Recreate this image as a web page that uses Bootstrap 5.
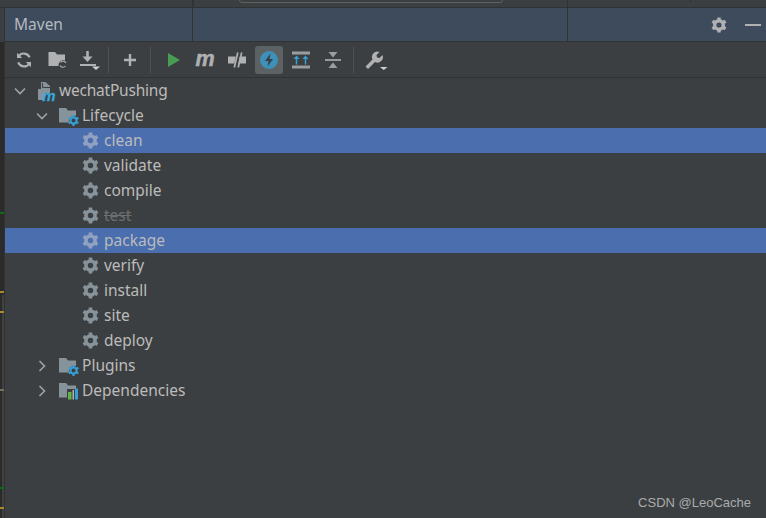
<!DOCTYPE html>
<html lang="en">
<head>
<meta charset="utf-8">
<title>Maven</title>
<link href="https://cdn.jsdelivr.net/npm/bootstrap@5.3.0/dist/css/bootstrap.min.css" rel="stylesheet">
<style>
html,body{height:518px;overflow:hidden}
body{background:#3c3f41;color:#bbb;font-family:"Noto Sans","Open Sans",sans-serif;font-size:15.5px;position:relative}
.topstrip{height:8px;border-bottom:1px solid #323232;position:relative}
.topmark{position:absolute;top:0;width:1px;height:7px;background:#323232}
.topmark.tm1{left:193px}
.topmark.tm2{left:690px;height:2px}
.topbox{position:absolute;left:239px;top:-6px;width:264px;height:9px;border:1px solid #5e6060;border-radius:3px}
.workarea{height:510px}
.railcol{width:5px;flex:none;position:relative;border-right:1px solid #323232}
.railtop{height:34px;background:#3c3f41}
.railrest{height:476px;background:#2b2b2b}
.railthumb{position:absolute;left:2px;top:287px;width:2px;height:223px;background:#414141}
.railmark{position:absolute;left:0;width:4px;height:2px}
.mgreen{background:#0b6e17}
.myellow{background:#a8892c}
.mgrey{background:#77725f}
.rm1{top:204px}.rm2{top:283px}.rm3{top:303px}.rm4{top:381px}.rm5{top:479px}.rm6{top:499px}
.panel{min-width:0}
.panelhead{height:34px;background:#3d4b5c;border-bottom:1px solid #323232;padding:0 9px;position:relative;font-size:15.5px;color:#b3bac2}
.headline{position:absolute;top:0;width:1px;height:41px;margin-top:-8px;background:#323232}
.hl1{left:187px}
.hl2{left:562px}
.headtools{gap:18px;margin-right:-4px;color:#afb1b3}
.toolrow{height:36px;border-bottom:1px solid #323232;padding-left:3px}
.toolbtn{width:32px;height:35px;flex:none;position:relative;display:flex;align-items:center;justify-content:center}
.toolbtn.activebtn::before{content:"";position:absolute;left:2px;top:4px;width:28px;height:27.5px;background:#5c6164;border-radius:3px}
.toolbtn svg{position:relative;display:block}
.toolsep{width:1px;height:26px;background:#515151;flex:none}
.sepa{margin:0 5px 0 4px}
.sepb{margin:0 6px 0 4px}
.treebox{background:transparent;border-radius:0}
.treerow{height:25px;background:transparent;border:0;border-radius:0!important;padding:0;color:#bbb;display:flex;align-items:center;line-height:25px;white-space:nowrap}
.treerow.picked{background:#4b6eaf;color:#bbb}
.treerow.muted{color:#6d6f70;text-decoration:line-through}
.lvl0{padding-left:8px}
.lvl1{padding-left:30px}
.lvl2{padding-left:77px}
.arrowbox{width:14px;height:25px;flex:none;display:flex;align-items:center;justify-content:center}
.nodeicon{flex:none;display:block}
.gap0{margin-left:11px}
.gap1{margin-left:10px}
.projname{margin-left:1px;letter-spacing:-.22px}
.namepad{margin-left:5px}
.cogplain{color:#87939a}
.cogpicked{color:#90a1c1}
.namewide{margin-left:3px}
.markcsdn{position:absolute;right:15px;bottom:6px;font-family:"Liberation Sans",Arial,sans-serif;font-size:13px;line-height:18px;color:#a9abad}
</style>
</head>
<body>
<svg width="0" height="0" class="position-absolute">
  <defs>
    <symbol id="cog" viewBox="0 0 16 16">
      <g stroke="currentColor" fill="none">
        <circle cx="8" cy="8" r="4.3" stroke-width="3.4"/>
        <path stroke-width="3.4" d="M8 .4V3M8 13V15.6M1.4 4.2 3.7 5.500M12.300 10.500 14.600 11.800M1.400 11.800 3.700 10.500M12.300 5.500 14.600 4.200"/>
      </g>
    </symbol>
    <symbol id="chevdown" viewBox="0 0 14 14"><path d="M2 4.500 7 9.500 12 4.500" fill="none" stroke="#a0a3a5" stroke-width="1.600"/></symbol>
    <symbol id="chevright" viewBox="0 0 14 14"><path d="M4.500 2 9.500 7 4.500 12" fill="none" stroke="#a0a3a5" stroke-width="1.600"/></symbol>
    <symbol id="gearfolder" viewBox="0 0 20 20">
      <path d="M0 2H7L9 4.500H17V10A5.500 5.500 0 0 0 10 16.500H0Z" fill="#87939a"/>
      <g fill="none" stroke="#389fd6">
        <circle cx="14.500" cy="14.500" r="3" stroke-width="2"/>
        <path stroke-width="2.200" d="M14.500 9V11M14.500 18V20M9.700 11.700 11.400 12.700M17.600 16.300 19.300 17.300M9.700 17.300 11.400 16.300M17.600 12.700 19.300 11.700"/>
      </g>
    </symbol>
  </defs>
</svg>

<div class="topstrip">
  <span class="topmark tm1"></span>
  <span class="topbox"></span>
  <span class="topmark tm2"></span>
</div>

<div class="workarea d-flex">
  <div class="railcol">
    <div class="railtop"></div>
    <div class="railrest"></div>
    <span class="railthumb"></span>
    <span class="railmark mgreen rm1"></span>
    <span class="railmark myellow rm2"></span>
    <span class="railmark myellow rm3"></span>
    <span class="railmark mgrey rm4"></span>
    <span class="railmark mgreen rm5"></span>
    <span class="railmark myellow rm6"></span>
  </div>

  <div class="panel flex-grow-1">
    <div class="panelhead d-flex align-items-center justify-content-between">
      <span>Maven</span>
      <span class="headline hl1"></span>
      <span class="headline hl2"></span>
      <span class="d-flex align-items-center headtools">
        <svg width="16" height="16"><use href="#cog"/></svg>
        <svg width="16" height="16"><path d="M0 8H16" stroke="#afb1b3" stroke-width="2"/></svg>
      </span>
    </div>

    <div class="toolrow d-flex align-items-center">
      <div class="toolbtn"><svg width="18" height="18" viewBox="0 0 18 18"><g fill="none" stroke="#afb1b3" stroke-width="2.200"><path d="M14.600 6.400A6.300 6.300 0 0 0 3.600 5.200"/><path d="M3.200 11.400A6.300 6.300 0 0 0 14.200 12.800"/></g><path d="M2 1.800V7H7.200ZM16 16.200V11H10.800Z" fill="#afb1b3"/></svg></div>
      <div class="toolbtn"><svg width="22" height="20" viewBox="-2 0 22 20"><path d="M1.500 2H8L10 4.500H18V10.500A5 5 0 0 0 11.500 16H1.500Z" fill="#afb1b3"/><g fill="none" stroke="#afb1b3" stroke-width="1.200"><path d="M19 13A3.300 3.300 0 0 0 13.500 12.500"/><path d="M13 15.500A3.300 3.300 0 0 0 18.500 16"/></g></svg></div>
      <div class="toolbtn"><svg width="24" height="20" viewBox="-3 0 24 20"><path d="M8.500 1V7" stroke="#afb1b3" stroke-width="2.600"/><path d="M3.500 6.500H13.500L8.500 12Z" fill="#afb1b3"/><path d="M1 15H17" stroke="#afb1b3" stroke-width="2"/><path d="M13 16.500H21L17 20Z" fill="#d0d2d4"/></svg></div>
      <span class="toolsep sepa"></span>
      <div class="toolbtn"><svg width="14" height="14" viewBox="0 0 14 14"><path d="M7 1V13M1 7H13" stroke="#afb1b3" stroke-width="2.400"/></svg></div>
      <span class="toolsep sepb"></span>
      <div class="toolbtn"><svg width="16" height="16" viewBox="-2 0 16 16"><path d="M1 1 13 8 1 15Z" fill="#499c54"/></svg></div>
      <div class="toolbtn"><svg width="28" height="28" viewBox="0 0 28 28"><text x="14" y="19.500" text-anchor="middle" font-family="Liberation Sans,sans-serif" font-weight="700" font-style="italic" font-size="21.500" fill="#afb1b3" stroke="#afb1b3" stroke-width=".5">m</text></svg></div>
      <div class="toolbtn"><svg width="20" height="18" viewBox="0 0 20 18"><path d="M1 5.500H8.700L7.300 12.500H1ZM12.700 5.500H19V12.500H11.300Z" fill="#afb1b3"/><path d="M10.800 1.500 7.300 16.500M14.700 1.500 11.200 16.500" stroke="#afb1b3" stroke-width="1.700"/></svg></div>
      <div class="toolbtn activebtn"><svg width="20" height="20" viewBox="0 0 20 20"><circle cx="10" cy="10" r="9" fill="#3e90b8"/><path d="M11.500 3.500 6 11H9.500L8.500 16.500 14 9H10.500Z" fill="#35424b"/></svg></div>
      <div class="toolbtn"><svg width="20" height="20" viewBox="0 0 20 20"><path d="M1 1.500H19V4.500H1ZM1 15.500H19V18.500H1Z" fill="#9a9da0"/><path d="M5.500 14.500V8.500M14.500 14.500V8.500" stroke="#389fd6" stroke-width="1.500"/><path d="M2.500 9 5.500 5.500 8.500 9ZM11.500 9 14.500 5.500 17.500 9Z" fill="#389fd6"/></svg></div>
      <div class="toolbtn"><svg width="18" height="18" viewBox="0 0 18 18"><path d="M1 9H17" stroke="#afb1b3" stroke-width="1.600"/><path d="M4.500 1H13.500L9 6.500ZM4.500 17H13.500L9 11.500Z" fill="#9a9da0"/></svg></div>
      <span class="toolsep sepb"></span>
      <div class="toolbtn"><svg width="24" height="22" viewBox="0 0 24 22"><path d="M1.500 17.500 8.500 10.500A5.500 5.500 0 0 1 15.500 3L12.500 6 13 8.500 15.500 9 18.500 6A5.500 5.500 0 0 1 11 13L4 20Z" fill="#afb1b3"/><path d="M16 18H23.500L19.750 21Z" fill="#d0d2d4"/></svg></div>
    </div>

    <div class="list-group treebox">
      <div class="list-group-item treerow lvl0">
        <span class="arrowbox"><svg width="14" height="14"><use href="#chevdown"/></svg></span>
        <svg class="nodeicon gap0" width="20" height="25" viewBox="0 0 20 25"><path d="M0 11H3V4H7.500L12 8V15H6V22H0Z" fill="#87939a"/><path d="M4.500 5V9.500H12" fill="none" stroke="#3c3f41" stroke-width="1"/><text x="11" y="22.500" text-anchor="middle" font-family="Liberation Sans,sans-serif" font-weight="700" font-style="italic" font-size="15" fill="#3aa5dc" stroke="#3aa5dc" stroke-width=".3">m</text></svg>
        <span class="projname">wechatPushing</span>
      </div>
      <div class="list-group-item treerow lvl1">
        <span class="arrowbox"><svg width="14" height="14"><use href="#chevdown"/></svg></span>
        <svg class="nodeicon gap1" width="20" height="20"><use href="#gearfolder"/></svg>
        <span class="namewide">Lifecycle</span>
      </div>
      <div class="list-group-item treerow lvl2 picked"><svg class="nodeicon cogpicked" width="17" height="17"><use href="#cog"/></svg><span class="namepad">clean</span></div>
      <div class="list-group-item treerow lvl2"><svg class="nodeicon cogplain" width="17" height="17"><use href="#cog"/></svg><span class="namepad">validate</span></div>
      <div class="list-group-item treerow lvl2"><svg class="nodeicon cogplain" width="17" height="17"><use href="#cog"/></svg><span class="namepad">compile</span></div>
      <div class="list-group-item treerow lvl2 muted"><svg class="nodeicon cogplain" width="17" height="17"><use href="#cog"/></svg><span class="namepad">test</span></div>
      <div class="list-group-item treerow lvl2 picked"><svg class="nodeicon cogpicked" width="17" height="17"><use href="#cog"/></svg><span class="namepad">package</span></div>
      <div class="list-group-item treerow lvl2"><svg class="nodeicon cogplain" width="17" height="17"><use href="#cog"/></svg><span class="namepad">verify</span></div>
      <div class="list-group-item treerow lvl2"><svg class="nodeicon cogplain" width="17" height="17"><use href="#cog"/></svg><span class="namepad">install</span></div>
      <div class="list-group-item treerow lvl2"><svg class="nodeicon cogplain" width="17" height="17"><use href="#cog"/></svg><span class="namepad">site</span></div>
      <div class="list-group-item treerow lvl2"><svg class="nodeicon cogplain" width="17" height="17"><use href="#cog"/></svg><span class="namepad">deploy</span></div>
      <div class="list-group-item treerow lvl1">
        <span class="arrowbox"><svg width="14" height="14"><use href="#chevright"/></svg></span>
        <svg class="nodeicon gap1" width="20" height="20"><use href="#gearfolder"/></svg>
        <span class="namewide">Plugins</span>
      </div>
      <div class="list-group-item treerow lvl1">
        <span class="arrowbox"><svg width="14" height="14"><use href="#chevright"/></svg></span>
        <svg class="nodeicon gap1" width="20" height="20" viewBox="0 0 20 20"><path d="M0 2H7L9 4.500H17V8H8V16.500H0Z" fill="#87939a"/><path d="M9 11H12.500V18.500H9Z" fill="#62b543"/><path d="M13.500 9H15V18.500H13.500Z" fill="#afb1b3"/><path d="M16 7.500H19V18.500H16Z" fill="#389fd6"/></svg>
        <span class="namewide">Dependencies</span>
      </div>
    </div>
  </div>
</div>
<div class="markcsdn">CSDN @LeoCache</div>
<script src="https://cdn.jsdelivr.net/npm/bootstrap@5.3.0/dist/js/bootstrap.bundle.min.js"></script>
</body>
</html>
